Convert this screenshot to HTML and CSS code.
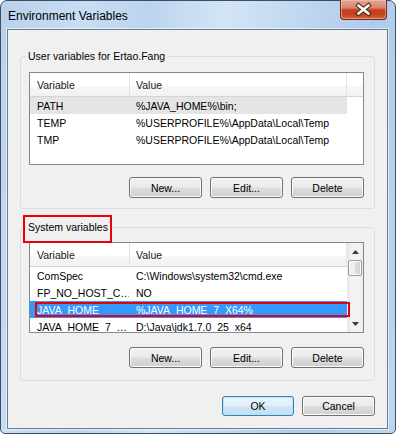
FILE: index.html
```html
<!DOCTYPE html>
<html>
<head>
<meta charset="utf-8">
<link rel="stylesheet" href="styles.css">
</head>
<body>
<div class="window">
  <div class="titlebar">
    <span class="title">Environment Variables</span>
    <div class="close">
      <svg width="45" height="19" viewBox="0 0 45 19">
        <path d="M17.5 5.5 L27.5 13.5 M27.5 5.5 L17.5 13.5" stroke="#4a2a22" stroke-width="4.6" stroke-linecap="square"/>
        <path d="M17.5 5.5 L27.5 13.5 M27.5 5.5 L17.5 13.5" stroke="#fff" stroke-width="2.4" stroke-linecap="square"/>
      </svg>
    </div>
  </div>
  <div class="client">
    <fieldset class="group g1">
      <legend>User variables for Ertao.Fang</legend>
      <div class="list l1">
        <div class="list-main">
          <div class="hdr">
            <div class="hcell c1">Variable</div>
            <div class="hcell c2">Value</div>
            <div class="hcell rest"></div>
          </div>
          <div class="row sel-gray"><div class="cell c1">PATH</div><div class="cell c2">%JAVA_HOME%\bin;</div></div>
          <div class="row"><div class="cell c1">TEMP</div><div class="cell c2">%USERPROFILE%\AppData\Local\Temp</div></div>
          <div class="row"><div class="cell c1">TMP</div><div class="cell c2">%USERPROFILE%\AppData\Local\Temp</div></div>
        </div>
      </div>
      <div class="btns">
        <button class="btn">New...</button>
        <button class="btn">Edit...</button>
        <button class="btn">Delete</button>
      </div>
    </fieldset>

    <fieldset class="group g2">
      <legend><span class="redbox lbl"></span>System variables</legend>
      <div class="list l2">
        <div class="list-main">
          <div class="hdr">
            <div class="hcell c1">Variable</div>
            <div class="hcell c2">Value</div>
          </div>
          <div class="row"><div class="cell c1">ComSpec</div><div class="cell c2">C:\Windows\system32\cmd.exe</div></div>
          <div class="row"><div class="cell c1">FP_NO_HOST_C…</div><div class="cell c2">NO</div></div>
          <div class="row sel-blue"><div class="cell c1">JAVA_HOME</div><div class="cell c2">%JAVA_HOME_7_X64%</div><span class="redbox rowbox"></span></div>
          <div class="row"><div class="cell c1">JAVA_HOME_7_…</div><div class="cell c2">D:\Java\jdk1.7.0_25_x64</div></div>
        </div>
        <div class="vscroll">
          <div class="arrow up"><svg width="7" height="4" viewBox="0 0 7 4"><path d="M0 4 L3.5 0 L7 4 Z" fill="#3c3c3c"/></svg></div>
          <div class="thumb"></div>
          <div class="track"></div>
          <div class="arrow down"><svg width="7" height="4" viewBox="0 0 7 4"><path d="M0 0 L3.5 4 L7 0 Z" fill="#3c3c3c"/></svg></div>
        </div>
      </div>
      <div class="btns">
        <button class="btn">New...</button>
        <button class="btn">Edit...</button>
        <button class="btn">Delete</button>
      </div>
    </fieldset>

    <div class="dlg-btns">
      <button class="btn default">OK</button>
      <button class="btn">Cancel</button>
    </div>
  </div>
</div>
</body>
</html>
```

FILE: styles.css
```css
* { box-sizing: border-box; }

body {
  margin: 0;
  background: #fff;
  font-family: "Liberation Sans", Arial, sans-serif;
  font-size: 10.5px;
  color: #000;
}

.window {
  width: 396px;
  height: 434px;
  border: 1px solid #3e4e62;
  border-radius: 7px 7px 5px 5px;
  padding: 0 7px 4px 6px;
  display: flex;
  flex-direction: column;
  background: linear-gradient(100deg, #b9d1ec 0%, #c9ddf3 18%, #bcd4ee 32%, #d3e5f6 48%, #c2d9f1 62%, #afcbea 80%, #bdd6f0 100%);
}

.titlebar {
  height: 28px;
  display: flex;
  align-items: flex-start;
  flex-shrink: 0;
}

.title {
  font-size: 12px;
  line-height: 14px;
  padding-top: 8px;
  margin-left: 1px;
  color: #000;
}

.close {
  margin-left: auto;
  margin-right: 1px;
  margin-top: -1px;
  width: 47px;
  height: 20px;
  border: 1px solid #6f2a1c;
  border-top: none;
  border-radius: 0 0 4px 4px;
  background: linear-gradient(#e6a595 0%, #dc8670 40%, #c6401f 52%, #c4401f 75%, #d9663f 100%);
  box-shadow: inset 0 0 0 1px rgba(255, 210, 200, 0.45);
}

.close svg { display: block; }

.client {
  flex: 1;
  background: #f0f0f0;
  border: 1px solid #6c7c8f;
  display: flex;
  flex-direction: column;
  box-shadow: 0 0 0 1px rgba(255, 255, 255, 0.55);
}

.group {
  margin: 0 12px;
  min-width: 0;
  border: 1px solid #d5dfe5;
  border-radius: 3px;
  padding: 9px 10px 10px 8px;
}

.g1 { margin-top: 19px; }
.g2 { margin-top: 11px; padding-top: 8px; padding-bottom: 12px; }

.group legend {
  padding: 0 2px;
  margin-left: -3px;
  line-height: 14px;
  font-size: 10.5px;
  position: relative;
}

.list {
  border: 1px solid #828790;
  background: #fff;
  display: flex;
  overflow: hidden;
}

.l1 { height: 93px; }
.l2 { height: 91px; }

.list-main {
  flex: 1;
  display: flex;
  flex-direction: column;
  min-width: 0;
}

.hdr {
  display: flex;
  height: 24px;
  flex-shrink: 0;
  background: linear-gradient(#ffffff 0%, #ffffff 55%, #f6f7f8 56%, #f1f2f4 100%);
  border-bottom: 1px solid #d5d5d5;
}

.hcell {
  display: flex;
  align-items: center;
  border-right: 1px solid #e2e3e5;
  color: #1a1a1a;
  white-space: nowrap;
}

.hcell.rest { flex: 1; border-right: none; }

.c1 { width: 100px; padding-left: 7px; }
.c2 { width: 217px; padding-left: 6px; }

.row {
  display: flex;
  align-items: center;
  height: 17px;
  width: 317px;
  flex-shrink: 0;
  position: relative;
}

.cell {
  white-space: nowrap;
  overflow: hidden;
}

.row .c1 { border-right: 1px solid transparent; }

.sel-gray { background: #e5e5e5; }

.sel-blue { background: #3399ff; color: #fff; }

.redbox {
  position: absolute;
  border: 2px solid #e8000b;
  pointer-events: none;
}

.rowbox {
  left: 5px;
  right: -3px;
  top: 1px;
  bottom: 1px;
}

.lbl {
  left: -3px;
  right: -2px;
  top: -5px;
  bottom: -9px;
}

.vscroll {
  width: 16px;
  flex-shrink: 0;
  display: flex;
  flex-direction: column;
  background: linear-gradient(90deg, #e6e6e6 0%, #f2f2f2 20%, #f4f4f4 80%, #e9e9e9 100%);
  border-left: 1px solid #ececec;
}

.arrow {
  height: 17px;
  display: flex;
  align-items: center;
  justify-content: center;
  flex-shrink: 0;
}

.thumb {
  height: 16px;
  margin: 0 1px 0 0;
  border: 1px solid #9a9a9a;
  border-radius: 2px;
  background: linear-gradient(90deg, #f4f4f4 0%, #ececec 50%, #dcdcdc 51%, #d2d2d2 100%);
  box-shadow: inset 0 0 0 1px #fafafa;
  flex-shrink: 0;
}

.track { flex: 1; }

.btns {
  display: flex;
  justify-content: flex-end;
  gap: 8px;
  margin-top: 12px;
}

.g2 .btns { margin-top: 14px; }

.btn {
  width: 73px;
  height: 21px;
  padding: 0;
  font-family: inherit;
  font-size: 10.5px;
  color: #000;
  border: 1px solid #707070;
  border-radius: 3px;
  background: linear-gradient(#f2f2f2 0%, #ebebeb 48%, #dddddd 52%, #cfcfcf 100%);
  box-shadow: inset 0 0 0 1px #fbfbfb;
}

.dlg-btns {
  display: flex;
  justify-content: flex-end;
  gap: 8px;
  margin: 15px 12px 0 12px;
}

.dlg-btns .btn { height: 20px; }
.dlg-btns .btn:first-child { width: 72px; }

.btn.default {
  border-color: #3c7fb1;
  background: linear-gradient(#eaf5fb 0%, #e2f0f9 48%, #cfe6f5 52%, #c2dff2 100%);
  box-shadow: inset 0 0 0 1px #b6e2f8;
}
```
